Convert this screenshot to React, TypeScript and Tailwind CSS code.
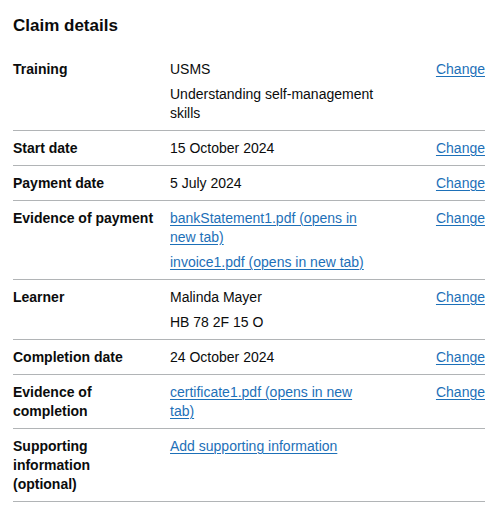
type Row = {
  key: string;
  values: { text: string; link?: boolean }[];
  action?: string;
};

const rows: Row[] = [
  {
    key: "Training",
    values: [{ text: "USMS" }, { text: "Understanding self-management skills" }],
    action: "Change",
  },
  { key: "Start date", values: [{ text: "15 October 2024" }], action: "Change" },
  { key: "Payment date", values: [{ text: "5 July 2024" }], action: "Change" },
  {
    key: "Evidence of payment",
    values: [
      { text: "bankStatement1.pdf (opens in new tab)", link: true },
      { text: "invoice1.pdf (opens in new tab)", link: true },
    ],
    action: "Change",
  },
  {
    key: "Learner",
    values: [{ text: "Malinda Mayer" }, { text: "HB 78 2F 15 O" }],
    action: "Change",
  },
  { key: "Completion date", values: [{ text: "24 October 2024" }], action: "Change" },
  {
    key: "Evidence of completion",
    values: [{ text: "certificate1.pdf (opens in new tab)", link: true }],
    action: "Change",
  },
  {
    key: "Supporting information (optional)",
    values: [{ text: "Add supporting information", link: true }],
  },
];

const linkCls =
  "text-[#1d70b8] underline decoration-1 underline-offset-[2px] cursor-pointer";

export default function App() {
  return (
    <div
      className="min-h-[515px] bg-white px-[13px] pt-[13px] text-[#0b0c0c]"
      style={{ fontFamily: '"Liberation Sans", Arial, sans-serif' }}
    >
      <h2 className="text-[17px] font-bold leading-[25px] mb-[14px]">Claim details</h2>
      <dl className="w-[472px] text-[14px] leading-[19px]">
        {rows.map((row) => (
          <div
            key={row.key}
            className="grid grid-cols-[157px_226px_1fr] border-b border-[#b1b4b6] pt-2 pb-[7px]"
          >
            <dt className="font-bold pr-[15px]">{row.key}</dt>
            <dd className="pr-5 flex flex-col gap-[6px]">
              {row.values.map((v) =>
                v.link ? (
                  <p key={v.text}>
                    <a className={linkCls}>{v.text}</a>
                  </p>
                ) : (
                  <p key={v.text}>{v.text}</p>
                )
              )}
            </dd>
            <dd className="text-right">
              {row.action && <a className={linkCls}>{row.action}</a>}
            </dd>
          </div>
        ))}
      </dl>
    </div>
  );
}
